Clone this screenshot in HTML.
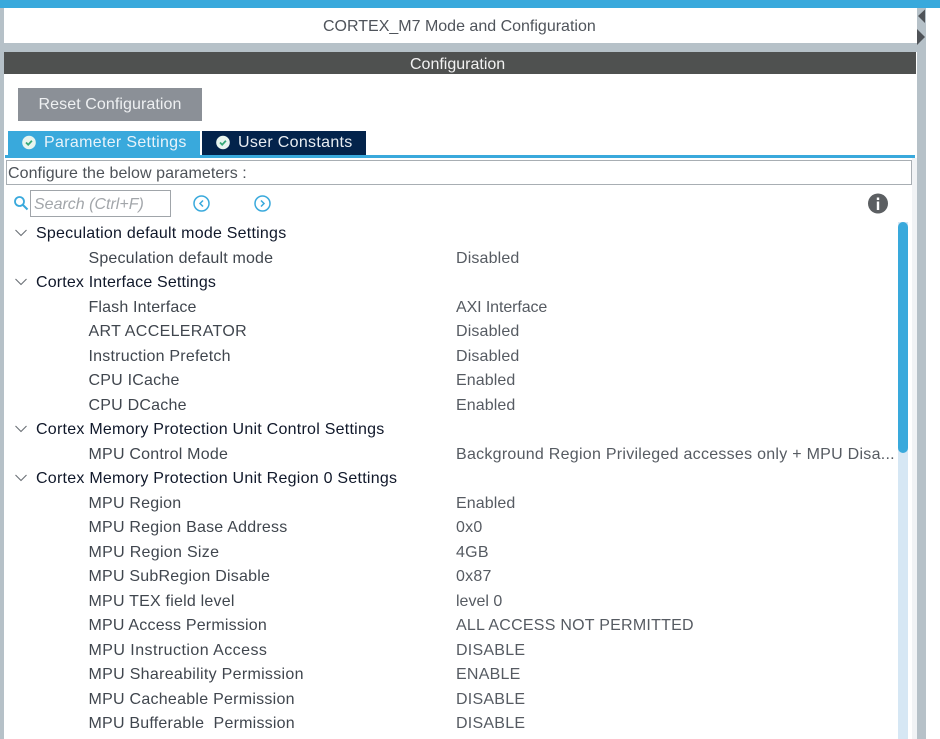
<!DOCTYPE html>
<html><head><meta charset="utf-8">
<style>
html,body{margin:0;padding:0;background:#fff}
#p{position:relative;width:940px;height:739px;overflow:hidden;background:#fff;font-family:"Liberation Sans",sans-serif;font-size:16px;color:#555a5f;filter:blur(.35px)}
.a{position:absolute;white-space:nowrap}
.b{position:absolute}
.h{left:36px;color:#10182a;letter-spacing:.23px}
.k{left:88.5px;color:#40464e;letter-spacing:.22px}
.v{left:456px;color:#565b62;letter-spacing:.24px}
.t{line-height:20px;height:20px}
</style></head><body><div id="p">
<div class="b" style="left:0;top:0;width:940px;height:8px;background:#39a9dc"></div>
<div class="b" style="left:0;top:8px;width:3.5px;height:731px;background:#b6c1c8"></div>
<div class="b" style="left:912px;top:158px;width:5px;height:581px;background:#f1f3f5"></div>
<div class="b" style="left:917px;top:8px;width:9px;height:731px;background:#b6c1c8"></div>
<div class="b" style="left:3px;top:43px;width:914px;height:9px;background:#b6c1c8"></div>
<div class="b" style="left:4px;top:52px;width:912px;height:22px;background:#4f5150"></div>
<div class="a t" style="left:323px;top:17px;color:#4f545b">CORTEX_M7 Mode and Configuration</div>
<div class="a t" style="left:410px;top:55px;color:#f2f2f2">Configuration</div>
<svg class="b" style="left:917px;top:8px" width="10" height="40"><path d="M8 1.500V15L1 8z" fill="#4f5358"/><path d="M0 21V37L8 29z" fill="#4f5358"/></svg>
<div class="a t" style="left:18px;top:88px;width:184px;height:33px;line-height:33px;background:#8b9097;color:#eef0f2;text-align:center;letter-spacing:.08px">Reset Configuration</div>
<div class="b" style="left:8px;top:131px;width:192px;height:25px;background:#39a9dc"></div>
<div class="b" style="left:202px;top:131px;width:164px;height:25px;background:#03234b"></div>
<div class="b" style="left:5px;top:155px;width:910px;height:3px;background:#39a9dc"></div>
<svg class="b" style="left:22px;top:135px" width="15" height="15"><circle cx="7" cy="7.500" r="6.800" fill="#e8f5ef"/><path d="M4 7.500l2.200 2.200 3.700-3.900" fill="none" stroke="#35a877" stroke-width="1.800"/></svg>
<svg class="b" style="left:216px;top:135px" width="15" height="15"><circle cx="7" cy="7.500" r="6.800" fill="#e8f5ef"/><path d="M4 7.500l2.200 2.200 3.700-3.900" fill="none" stroke="#35a877" stroke-width="1.800"/></svg>
<div class="a t" style="left:44px;top:133px;color:#e8f3fa;letter-spacing:.32px">Parameter Settings</div>
<div class="a t" style="left:238px;top:133px;color:#e8edf2;letter-spacing:.31px">User Constants</div>
<div class="b" style="left:6px;top:160px;width:904px;height:23px;border:1px solid #a8aeb3"></div>
<div class="a t" style="left:8px;top:164px;color:#4d5258;letter-spacing:.07px">Configure the below parameters :</div>
<svg class="b" style="left:13px;top:195px" width="16" height="16"><circle cx="6.500" cy="6.500" r="4.500" fill="none" stroke="#39a9dc" stroke-width="1.800"/><path d="M10 10l4.500 4.500" stroke="#39a9dc" stroke-width="2"/></svg>
<div class="b" style="left:30px;top:190px;width:139px;height:25px;border:1px solid #a0a5aa"></div>
<div class="a t" style="left:34px;top:195px;color:#a2a6aa;font-style:italic">Search (Ctrl+F)</div>
<svg class="b" style="left:192px;top:194px" width="19" height="19"><circle cx="9.500" cy="9.500" r="7.500" fill="none" stroke="#39a9dc" stroke-width="1.500"/><path d="M11 6.500L8 9.500l3 3" fill="none" stroke="#39a9dc" stroke-width="1.500"/></svg>
<svg class="b" style="left:253px;top:194px" width="19" height="19"><circle cx="9.500" cy="9.500" r="7.500" fill="none" stroke="#39a9dc" stroke-width="1.500"/><path d="M8 6.500l3 3-3 3" fill="none" stroke="#39a9dc" stroke-width="1.500"/></svg>
<svg class="b" style="left:867px;top:193px" width="22" height="21"><circle cx="11" cy="10.500" r="10" fill="#5c5f62"/><rect x="9.800" y="8.500" width="2.400" height="8.500" fill="#fff"/><rect x="9.800" y="4.500" width="2.400" height="2.500" fill="#fff"/></svg>
<div class="b" style="left:898px;top:222px;width:10px;height:517px;background:#d6e7f4"></div>
<div class="b" style="left:898px;top:222px;width:10px;height:231px;background:#39a9dc;border-radius:5px"></div>
<svg class="b" style="left:14px;top:228px" width="14" height="10"><path d="M1.500 2l5.500 5.500L12.500 2" fill="none" stroke="#6a6f75" stroke-width="1.100"/></svg>
<svg class="b" style="left:14px;top:277px" width="14" height="10"><path d="M1.500 2l5.500 5.500L12.500 2" fill="none" stroke="#6a6f75" stroke-width="1.100"/></svg>
<svg class="b" style="left:14px;top:424px" width="14" height="10"><path d="M1.500 2l5.500 5.500L12.500 2" fill="none" stroke="#6a6f75" stroke-width="1.100"/></svg>
<svg class="b" style="left:14px;top:473px" width="14" height="10"><path d="M1.500 2l5.500 5.500L12.500 2" fill="none" stroke="#6a6f75" stroke-width="1.100"/></svg>
<div class="a t h" style="top:224px">Speculation default mode Settings</div>
<div class="a t k" style="top:249px;letter-spacing:.17px">Speculation default mode</div><div class="a t v" style="top:249px;letter-spacing:.15px">Disabled</div>
<div class="a t h" style="top:273px;letter-spacing:.16px">Cortex Interface Settings</div>
<div class="a t k" style="top:298px;letter-spacing:.15px">Flash Interface</div><div class="a t v" style="top:298px;letter-spacing:-.1px">AXI Interface</div>
<div class="a t k" style="top:322px;letter-spacing:.33px">ART ACCELERATOR</div><div class="a t v" style="top:322px;letter-spacing:.15px">Disabled</div>
<div class="a t k" style="top:347px">Instruction Prefetch</div><div class="a t v" style="top:347px;letter-spacing:.15px">Disabled</div>
<div class="a t k" style="top:371px">CPU ICache</div><div class="a t v" style="top:371px;letter-spacing:.1px">Enabled</div>
<div class="a t k" style="top:396px">CPU DCache</div><div class="a t v" style="top:396px;letter-spacing:.1px">Enabled</div>
<div class="a t h" style="top:420px;letter-spacing:.25px">Cortex Memory Protection Unit Control Settings</div>
<div class="a t k" style="top:445px">MPU Control Mode</div><div class="a t v" style="top:445px;letter-spacing:.27px">Background Region Privileged accesses only + MPU Disa...</div>
<div class="a t h" style="top:469px;letter-spacing:.25px">Cortex Memory Protection Unit Region 0 Settings</div>
<div class="a t k" style="top:494px">MPU Region</div><div class="a t v" style="top:494px;letter-spacing:.1px">Enabled</div>
<div class="a t k" style="top:518px">MPU Region Base Address</div><div class="a t v" style="top:518px">0x0</div>
<div class="a t k" style="top:543px;letter-spacing:.3px">MPU Region Size</div><div class="a t v" style="top:543px">4GB</div>
<div class="a t k" style="top:567px">MPU SubRegion Disable</div><div class="a t v" style="top:567px">0x87</div>
<div class="a t k" style="top:592px">MPU TEX field level</div><div class="a t v" style="top:592px;letter-spacing:0">level 0</div>
<div class="a t k" style="top:616px;letter-spacing:.2px">MPU Access Permission</div><div class="a t v" style="top:616px">ALL ACCESS NOT PERMITTED</div>
<div class="a t k" style="top:641px;letter-spacing:.45px">MPU Instruction Access</div><div class="a t v" style="top:641px">DISABLE</div>
<div class="a t k" style="top:665px;letter-spacing:.3px">MPU Shareability Permission</div><div class="a t v" style="top:665px">ENABLE</div>
<div class="a t k" style="top:690px;letter-spacing:.26px">MPU Cacheable Permission</div><div class="a t v" style="top:690px">DISABLE</div>
<div class="a t k" style="top:714px">MPU Bufferable&nbsp; Permission</div><div class="a t v" style="top:714px">DISABLE</div>
</div></body></html>
